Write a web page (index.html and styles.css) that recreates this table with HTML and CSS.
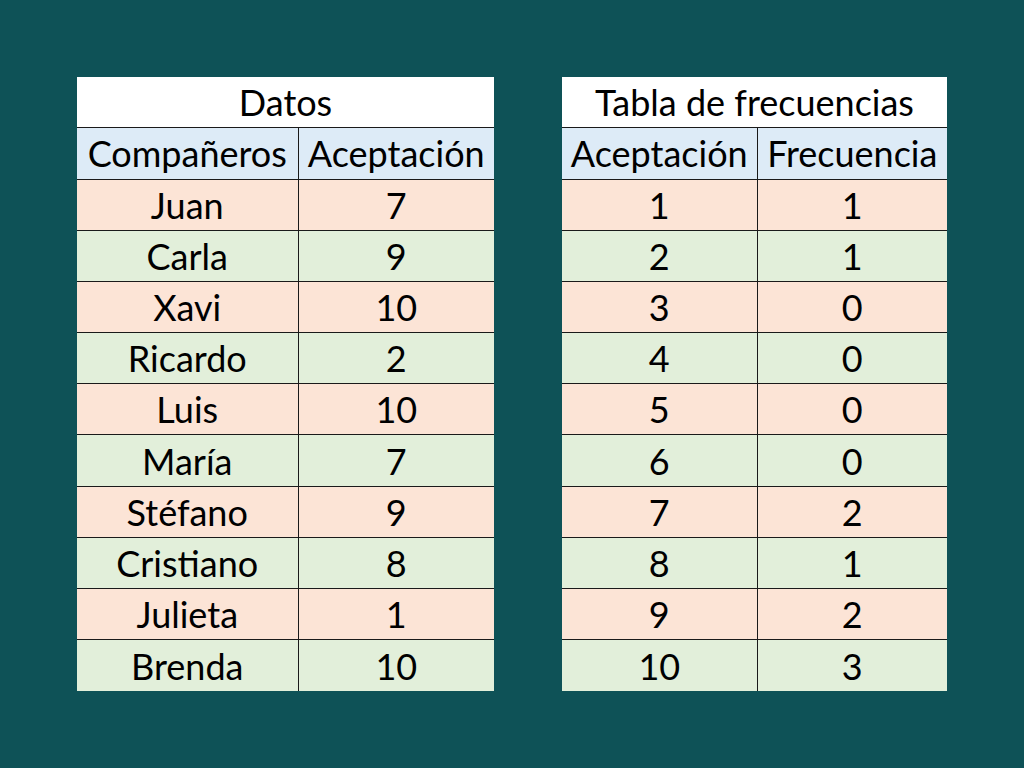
FILE: index.html
```html
<!DOCTYPE html>
<html lang="es">
<head>
<meta charset="utf-8">
<link rel="stylesheet" href="styles.css">
</head>
<body>
<div class="page">
  <table class="tbl t1">
    <colgroup><col class="c1a"><col class="c1b"></colgroup>
    <tr class="title"><td colspan="2">Datos</td></tr>
    <tr class="head"><td>Compañeros</td><td>Aceptación</td></tr>
    <tr class="p"><td>Juan</td><td>7</td></tr>
    <tr class="g"><td>Carla</td><td>9</td></tr>
    <tr class="p"><td>Xavi</td><td>10</td></tr>
    <tr class="g"><td>Ricardo</td><td>2</td></tr>
    <tr class="p"><td>Luis</td><td>10</td></tr>
    <tr class="g"><td>María</td><td>7</td></tr>
    <tr class="p"><td>Stéfano</td><td>9</td></tr>
    <tr class="g"><td>Cristiano</td><td>8</td></tr>
    <tr class="p"><td>Julieta</td><td>1</td></tr>
    <tr class="g"><td>Brenda</td><td>10</td></tr>
  </table>
  <table class="tbl t2">
    <colgroup><col class="c2a"><col class="c2b"></colgroup>
    <tr class="title"><td colspan="2">Tabla de frecuencias</td></tr>
    <tr class="head"><td>Aceptación</td><td>Frecuencia</td></tr>
    <tr class="p"><td>1</td><td>1</td></tr>
    <tr class="g"><td>2</td><td>1</td></tr>
    <tr class="p"><td>3</td><td>0</td></tr>
    <tr class="g"><td>4</td><td>0</td></tr>
    <tr class="p"><td>5</td><td>0</td></tr>
    <tr class="g"><td>6</td><td>0</td></tr>
    <tr class="p"><td>7</td><td>2</td></tr>
    <tr class="g"><td>8</td><td>1</td></tr>
    <tr class="p"><td>9</td><td>2</td></tr>
    <tr class="g"><td>10</td><td>3</td></tr>
  </table>
</div>
</body>
</html>
```
FILE: styles.css
```css
html, body {
  margin: 0;
  padding: 0;
  background: #0e5257;
}
.page {
  width: 1024px;
  height: 768px;
  box-sizing: border-box;
  padding: 77px 0 0 77px;
  display: flex;
  align-items: flex-start;
  gap: 68px;
}
.tbl {
  border-collapse: collapse;
  table-layout: fixed;
  font-family: Lato, "Noto Sans", sans-serif;
  font-size: 36px;
  color: #000000;
}
.t1 { width: 417px; }
.t2 { width: 385px; }
.c1a { width: 221px; }
.c1b { width: 196px; }
.c2a { width: 195px; }
.c2b { width: 190px; }
.tbl td {
  height: 51.2px;
  padding: 0;
  box-sizing: border-box;
  text-align: center;
  vertical-align: middle;
  border-top: 1px solid #1a1a1a;
  line-height: 1;
  white-space: nowrap;
}
.tbl td + td {
  border-left: 1px solid #1a1a1a;
}
.tbl tr.title td {
  border-top: none;
  height: 50px;
  background: #ffffff;
}
.tbl tr.head td {
  height: 52px;
  background: #ddebf7;
}
.tbl tr.p td { background: #fce4d6; }
.tbl tr.g td { background: #e2efda; }
```
